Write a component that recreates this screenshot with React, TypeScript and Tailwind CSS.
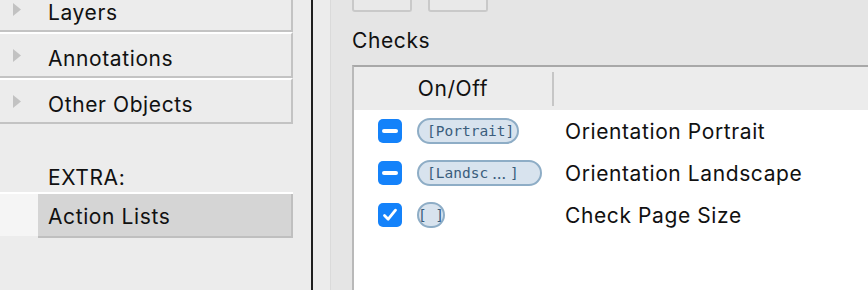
import React from "react";

const Tri = () => (
  <svg width="10" height="15" viewBox="0 0 10 15" className="shrink-0">
    <polygon points="1,1 9,7.5 1,14" fill="#c2c2c2" />
  </svg>
);

const T = ({ children, className = "" }: { children: React.ReactNode; className?: string }) => (
  <span className={`text-[21px] leading-[24px] tracking-[0.6px] text-[#111] whitespace-nowrap ${className}`}>{children}</span>
);

const GroupRow = ({ label, first }: { label: string; first?: boolean }) => (
  <div
    className={`w-[293px] h-[46px] shrink-0 border-t-2 border-t-white border-r-2 border-b-2 border-r-[#c3c3c3] border-b-[#c3c3c3] flex items-center ${
      first ? "mt-[-14px]" : ""
    }`}
  >
    <div className="w-[48px] pl-[12px] flex items-center">
      <Tri />
    </div>
    <T className="pt-[8px]">{label}</T>
  </div>
);

const Minus = () => (
  <div className="w-[24px] h-[24px] rounded-[5px] bg-[#1482fa] flex items-center justify-center shrink-0">
    <div className="w-[16px] h-[4px] rounded-full bg-white" />
  </div>
);

const Check = () => (
  <div className="w-[24px] h-[24px] rounded-[5px] bg-[#1482fa] flex items-center justify-center shrink-0">
    <svg width="18" height="18" viewBox="0 0 18 18">
      <path d="M3.5 9.5 L7.2 13.2 L14.5 4.2" fill="none" stroke="white" strokeWidth="2.8" strokeLinecap="round" strokeLinejoin="round" />
    </svg>
  </div>
);

const Pill = ({ children, w, center }: { children: React.ReactNode; w: string; center?: boolean }) => (
  <div
    className={`${w} h-[26px] rounded-full border-2 border-[#8eadc6] bg-[#d8e3ee] flex items-center shrink-0 text-[#3a5d7c] text-[14.5px] leading-none whitespace-nowrap ${
      center ? "justify-center" : "pl-[8px]"
    }`}
    style={{ fontFamily: '"DejaVu Sans Mono", "Liberation Mono", monospace' }}
  >
    {children}
  </div>
);

const CheckRow = ({ box, pill, label }: { box: React.ReactNode; pill: React.ReactNode; label: string }) => (
  <div className="h-[42px] flex items-center">
    <div className="w-[24px]" />
    {box}
    <div className="w-[15px]" />
    <div className="w-[148px] flex items-center">{pill}</div>
    <T className="pt-[2px]">{label}</T>
  </div>
);

export default function App() {
  return (
    <div
      className="w-[868px] h-[290px] flex overflow-hidden bg-[#ececec]"
      style={{ fontFamily: 'Inter, "Noto Sans", sans-serif' }}
    >
      {/* Left sidebar */}
      <div className="w-[311px] shrink-0 flex flex-col">
        <GroupRow label="Layers" first />
        <GroupRow label="Annotations" />
        <GroupRow label="Other Objects" />
        <div className="h-[68px] shrink-0 flex items-end pl-[48px] pb-[2px]">
          <T>EXTRA:</T>
        </div>
        <div className="w-[293px] h-[46px] shrink-0 border-t-2 border-t-white flex">
          <div className="w-[38px] h-[42px] bg-[#f5f5f5]" />
          <div className="flex-1 bg-[#d5d5d5] border-r-2 border-b-2 border-[#bfbfbf] flex items-center pl-[10px]">
            <T className="pt-[4px]">Action Lists</T>
          </div>
        </div>
      </div>

      {/* Divider */}
      <div className="w-[2px] shrink-0 bg-[#1f1f1f]" />
      <div className="w-[17px] shrink-0 bg-[#ececec]" />

      {/* Right panel */}
      <div className="flex-1 bg-[#e5e5e5] border-l border-[#dadada] pl-[21px] flex flex-col">
        <div className="flex gap-[16px] shrink-0">
          <div className="w-[60px] h-[12px] border-x-2 border-b-2 border-[#c9c9c9] bg-[#e9e9e9] rounded-b-[3px]" />
          <div className="w-[60px] h-[12px] border-x-2 border-b-2 border-[#c9c9c9] bg-[#e9e9e9] rounded-b-[3px]" />
        </div>
        <div className="mt-[17px] flex">
          <T>Checks</T>
        </div>
        <div className="mt-[12px] flex-1 flex flex-col border-t-2 border-l-2 border-t-[#a8a8a8] border-l-[#b9b9b9]">
          <div className="h-[43px] bg-[#ececec] flex items-center shrink-0">
            <div className="w-[198px] flex justify-center">
              <T>On/Off</T>
            </div>
            <div className="w-[2px] h-[34px] bg-[#c6c6c6]" />
          </div>
          <div className="flex-1 bg-white flex flex-col">
            <CheckRow box={<Minus />} pill={<Pill w="w-[102px]">[Portrait]</Pill>} label="Orientation Portrait" />
            <CheckRow
              box={<Minus />}
              pill={
                <Pill w="w-[125px]">
                  [Landsc
                  <span className="inline-block w-[22px] text-center text-[16px]" style={{ fontFamily: "Inter, sans-serif" }}>
                    …
                  </span>
                  ]
                </Pill>
              }
              label="Orientation Landscape"
            />
            <CheckRow box={<Check />} pill={<Pill w="w-[28px]" center>[ ]</Pill>} label="Check Page Size" />
          </div>
        </div>
      </div>
    </div>
  );
}
